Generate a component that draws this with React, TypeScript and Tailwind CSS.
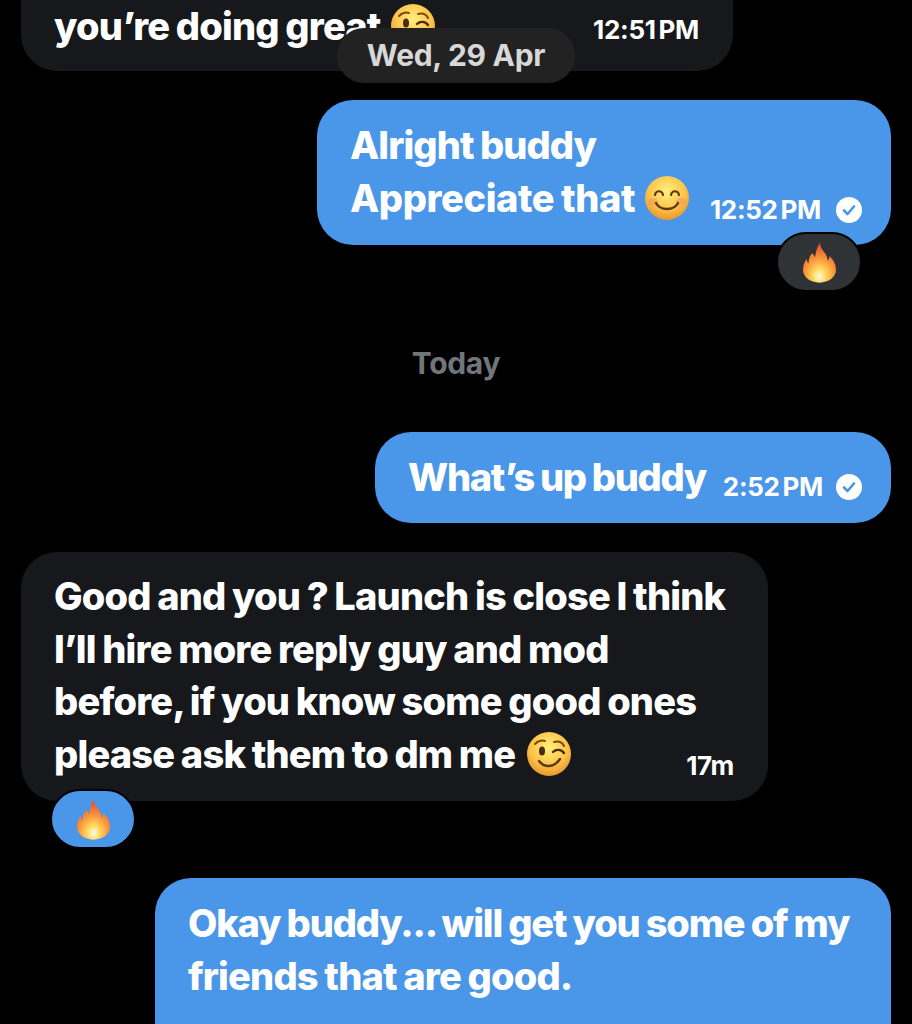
import { useId } from "react"

function Fire({ className }: { className?: string }) {
  const id = useId()
  return (
    <svg viewBox="0 0 36 44" className={className}>
      <defs>
        <radialGradient id={id} cx="50%" cy="84%" r="78%">
          <stop offset="0" stopColor="#fffbe0" />
          <stop offset="0.25" stopColor="#ffd95e" />
          <stop offset="0.55" stopColor="#fb9a3c" />
          <stop offset="1" stopColor="#e9502c" />
        </radialGradient>
      </defs>
      <path
        d="M19 0c-1 5 2 8 5 12 2 3 3 6 3 8 1-1 2-3 2-5 4 4 7 9 7 15 0 8-8 14-18 14S0 38 0 30c0-5 2-9 4-12 0 2 1 4 2 5 0-4 1-8 4-11 2 2 3 3 3 5 1-6 2-12 6-17z"
        fill={`url(#${id})`}
      />
    </svg>
  )
}

function FaceBase({ children, className }: { children: React.ReactNode; className?: string }) {
  const id = useId()
  return (
    <svg viewBox="0 0 44 44" className={className}>
      <defs>
        <radialGradient id={id} cx="50%" cy="35%" r="68%">
          <stop offset="0" stopColor="#fff07c" />
          <stop offset="0.6" stopColor="#fcc44a" />
          <stop offset="1" stopColor="#e8902a" />
        </radialGradient>
      </defs>
      <circle cx="22" cy="22" r="22" fill={`url(#${id})`} />
      {children}
    </svg>
  )
}

function SmileEmoji({ className }: { className?: string }) {
  return (
    <FaceBase className={className}>
      <ellipse cx="8" cy="26" rx="5" ry="4" fill="#f59a5c" opacity="0.6" />
      <ellipse cx="36" cy="26" rx="5" ry="4" fill="#f59a5c" opacity="0.6" />
      <path d="M10 19c1-5 7-5 8 0M26 19c1-5 7-5 8 0" fill="none" stroke="#5e3a14" strokeWidth="2.200" strokeLinecap="round" />
      <path d="M11 27c4 8 18 8 22 0" fill="none" stroke="#5e3a14" strokeWidth="2.400" strokeLinecap="round" />
    </FaceBase>
  )
}

function WinkEmoji({ className }: { className?: string }) {
  return (
    <FaceBase className={className}>
      <path d="M8 12c3-3 7-4 10-3M27 10c4-1 8 0 10 4" fill="none" stroke="#7a4a14" strokeWidth="2" strokeLinecap="round" />
      <ellipse cx="15" cy="19" rx="3" ry="4.500" fill="#4a2c10" />
      <path d="M26 20c3-3 8-3 11 1" fill="none" stroke="#4a2c10" strokeWidth="2.400" strokeLinecap="round" />
      <path d="M12 29c5 7 15 7 21-2" fill="none" stroke="#5e3a14" strokeWidth="2.400" strokeLinecap="round" />
    </FaceBase>
  )
}

function ReadCheck() {
  return (
    <svg viewBox="0 0 26 26" className="h-[26px] w-[26px] shrink-0">
      <circle cx="13" cy="13" r="13" fill="#ffffff" />
      <path d="M8 13.500l3.500 3.500L18 9.500" fill="none" stroke="#4a96e8" strokeWidth="2.600" strokeLinecap="round" strokeLinejoin="round" />
    </svg>
  )
}

function Reaction({ color }: { color: string }) {
  return (
    <div className={`flex h-[60px] w-[86px] items-center justify-center rounded-[30px] border-2 border-black ${color}`}>
      <Fire className="h-[41px] w-[33px]" />
    </div>
  )
}

const bubbleText = "text-[38px] font-extrabold leading-[52.500px] tracking-[-0.8px] [word-spacing:-1px] text-white whitespace-nowrap"
const timeText = "text-[26px] font-bold leading-none tracking-[-0.3px] [word-spacing:-3px] text-white whitespace-nowrap"

export default function App() {
  return (
    <div className="relative flex h-[1024px] w-[912px] flex-col overflow-hidden bg-black px-[21px] font-['Inter',sans-serif]">
      {/* Sticky date */}
      <div className="absolute left-[337px] top-[28px] z-10 flex h-[55px] w-[238px] items-center justify-center rounded-[27px] bg-[#222222] text-[30px] font-bold tracking-[-0.3px] text-[#d8d8d8]">
        Wed, 29 Apr
      </div>

      {/* Earlier message, cut off by the top edge */}
      <div className="-mt-[72px] flex h-[143px] w-[712px] shrink-0 items-end justify-between rounded-[36px] bg-[#16181c] pb-[19px] pl-[33px] pr-[34px]">
        <div className={`flex items-center gap-[10px] ${bubbleText}`}>
          <span>you’re doing great</span>
          <WinkEmoji className="h-[44px] w-[44px]" />
        </div>
        <span className={`${timeText} mb-[9px]`}>12:51 PM</span>
      </div>

      <div className="relative mt-[29px] shrink-0 self-end">
        <div className="flex h-[145px] w-[574px] items-end justify-between rounded-[36px] bg-[#4a96e8] pb-[21px] pl-[33px] pr-[29px]">
          <div className={bubbleText}>
            <div className="tracking-[-0.9px]">Alright buddy</div>
            <div className="flex items-center gap-[10px]">
              <span className="tracking-[-0.4px]">Appreciate that</span>
              <SmileEmoji className="h-[44px] w-[44px]" />
            </div>
          </div>
          <div className="mb-[1px] flex items-center gap-[15px]">
            <span className={timeText}>12:52 PM</span>
            <ReadCheck />
          </div>
        </div>
        <div className="absolute right-[29px] top-[132px]">
          <Reaction color="bg-[#2f3336]" />
        </div>
      </div>

      <div className="mt-[99px] shrink-0 text-center text-[30px] font-bold leading-[38px] tracking-[-0.3px] text-[#71767b]">Today</div>

      <div className="mt-[50px] flex h-[91px] w-[516px] shrink-0 items-center justify-between self-end rounded-[36px] bg-[#4a96e8] pl-[33px] pr-[29px]">
        <span className={`${bubbleText} tracking-[-1.300px]`}>What’s up buddy</span>
        <div className="mt-[19px] flex items-center gap-[13px]">
          <span className={timeText}>2:52 PM</span>
          <ReadCheck />
        </div>
      </div>

      <div className="relative mt-[29px] flex h-[249px] w-[747px] shrink-0 flex-col justify-end rounded-[36px] bg-[#16181c] pb-[21px] pl-[33px] pr-[34px]">
        <div className={bubbleText}>
          <div>Good and you ? Launch is close I think</div>
          <div>I’ll hire more reply guy and mod</div>
          <div>before, if you know some good ones</div>
          <div className="flex items-center justify-between">
            <div className="flex items-center gap-[12px]">
              <span>please ask them to dm me</span>
              <WinkEmoji className="h-[44px] w-[44px]" />
            </div>
            <span className={`${timeText} mt-[25px]`}>17m</span>
          </div>
        </div>
        <div className="absolute left-[29px] top-[237px]">
          <Reaction color="bg-[#4a96e8]" />
        </div>
      </div>

      <div className="mt-[77px] h-[200px] w-[736px] shrink-0 self-end rounded-[36px] bg-[#4a96e8] pl-[33px] pr-[33px] pt-[19px]">
        <div className={bubbleText}>
          <div className="tracking-[-1.150px]">Okay buddy... will get you some of my</div>
          <div>friends that are good.</div>
        </div>
      </div>
    </div>
  )
}
